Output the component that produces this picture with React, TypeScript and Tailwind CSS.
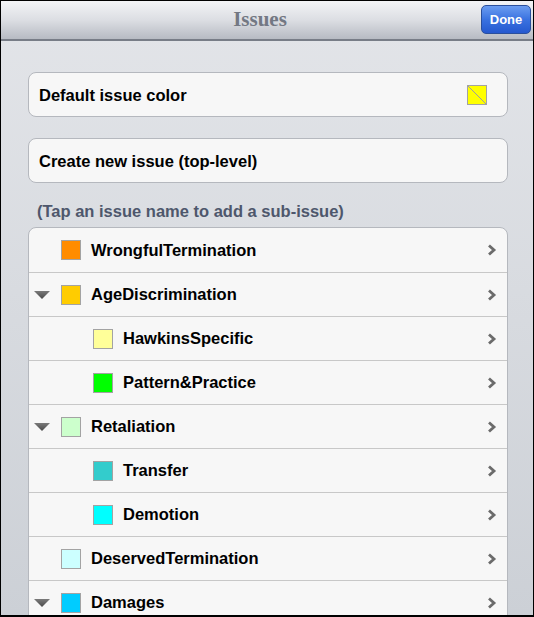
import React from "react";

type Row = { name: string; color: string; level: number; expanded?: boolean };

const rows: Row[] = [
  { name: "WrongfulTermination", color: "#ff8c00", level: 0 },
  { name: "AgeDiscrimination", color: "#ffcc00", level: 0, expanded: true },
  { name: "HawkinsSpecific", color: "#ffff99", level: 1 },
  { name: "Pattern&Practice", color: "#00ff00", level: 1 },
  { name: "Retaliation", color: "#ccffcc", level: 0, expanded: true },
  { name: "Transfer", color: "#33cccc", level: 1 },
  { name: "Demotion", color: "#00ffff", level: 1 },
  { name: "DeservedTermination", color: "#ccffff", level: 0 },
  { name: "Damages", color: "#00ccff", level: 0, expanded: true },
];

function Chevron() {
  return (
    <svg width="10" height="12" viewBox="0 0 10 12" className="shrink-0">
      <path d="M2 1.5 L7 6 L2 10.5" fill="none" stroke="#6b6b6b" strokeWidth="2.8" strokeLinejoin="miter" />
    </svg>
  );
}

function Triangle() {
  return (
    <svg width="16" height="8" viewBox="0 0 16 8">
      <defs>
        <linearGradient id="tg" x1="0" y1="0" x2="0" y2="1">
          <stop offset="0" stopColor="#7a7a7a" />
          <stop offset="1" stopColor="#4a4a4a" />
        </linearGradient>
      </defs>
      <path d="M0 0 L16 0 L8 8 Z" fill="url(#tg)" />
    </svg>
  );
}

function Swatch({ color }: { color: string }) {
  return <div className="w-[20px] h-[20px] border border-[#a3a3a3] shrink-0" style={{ backgroundColor: color }} />;
}

export default function App() {
  return (
    <div
      className="w-[534px] h-[617px] overflow-hidden border-l border-t border-r border-b-2 border-black flex flex-col bg-gradient-to-b from-[#e3e5e9] to-[#ccd0d6]"
      style={{ fontFamily: '"Liberation Sans", Arial, sans-serif' }}
    >
      <div className="h-[40px] shrink-0 relative flex items-center justify-center bg-gradient-to-b from-[#f3f4f6] via-[#dcdee3] to-[#b7bbc3] border-b-2 border-[#787d87]">
        <span
          className="text-[21px] font-bold text-[#737883] ml-[-14px]"
          style={{ fontFamily: '"Liberation Serif", "Times New Roman", serif' }}
        >
          Issues
        </span>
        <div className="absolute right-[2px] top-[4px] w-[50px] h-[29px] rounded-[5px] border border-[#2a4f9c] bg-gradient-to-b from-[#6b9cf0] via-[#3a72e0] to-[#2558cf] flex items-center justify-center text-white font-bold text-[13px]">
          Done
        </div>
      </div>

      <div className="flex flex-col pl-[27px] pr-[25px] pt-[31px]">
        <div className="h-[45px] rounded-[8px] border border-[#b5b8be] bg-[#f7f7f7] flex items-center justify-between pl-[10px] pr-[20px]">
          <span className="text-[16.5px] font-bold text-black pt-[2px]">Default issue color</span>
          <svg width="20" height="20" viewBox="0 0 20 20">
            <rect x="0.5" y="0.5" width="19" height="19" fill="#ffff00" stroke="#a3a3a3" />
            <line x1="1" y1="1" x2="19" y2="19" stroke="#9a9aa6" strokeWidth="1" />
          </svg>
        </div>

        <div className="h-[45px] mt-[21px] rounded-[8px] border border-[#b5b8be] bg-[#f7f7f7] flex items-center pl-[10px]">
          <span className="text-[16.5px] font-bold text-black pt-[2px]">Create new issue (top-level)</span>
        </div>

        <div className="h-[44px] flex items-end pb-[3px] pl-[9px] text-[16.5px] font-bold text-[#4e576c]">
          (Tap an issue name to add a sub-issue)
        </div>

        <div className="rounded-t-[8px] border border-[#b5b8be] bg-[#f7f7f7]">
          {rows.map((r, i) => (
            <div
              key={r.name}
              className={
                "h-[44px] flex items-center pr-[10px] " + (i > 0 ? "border-t border-[#c8c8c8]" : "")
              }
            >
              <div className="w-[32px] shrink-0 flex justify-start pl-[5px]">
                {r.expanded ? <Triangle /> : null}
              </div>
              <div className={r.level === 1 ? "w-[32px] shrink-0" : "w-0 shrink-0"} />
              <Swatch color={r.color} />
              <span className="ml-[10px] text-[16.5px] font-bold text-black flex-1">{r.name}</span>
              <Chevron />
            </div>
          ))}
        </div>
      </div>
    </div>
  );
}
